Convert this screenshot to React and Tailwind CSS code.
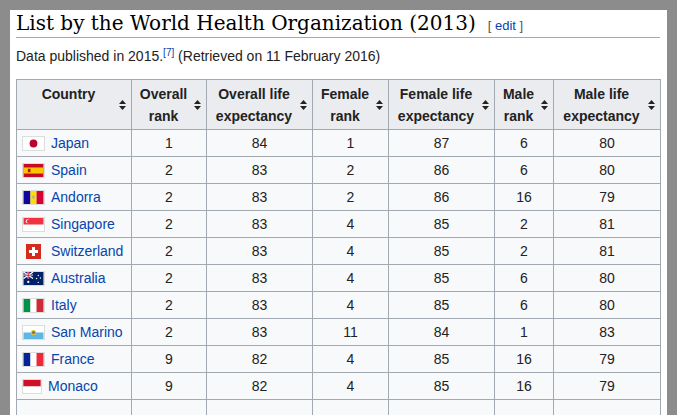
import React from "react";

const rows = [
  ["Japan", "jp", 1, 84, 1, 87, 6, 80],
  ["Spain", "es", 2, 83, 2, 86, 6, 80],
  ["Andorra", "ad", 2, 83, 2, 86, 16, 79],
  ["Singapore", "sg", 2, 83, 4, 85, 2, 81],
  ["Switzerland", "ch", 2, 83, 4, 85, 2, 81],
  ["Australia", "au", 2, 83, 4, 85, 6, 80],
  ["Italy", "it", 2, 83, 4, 85, 6, 80],
  ["San Marino", "sm", 2, 83, 11, 84, 1, 83],
  ["France", "fr", 9, 82, 4, 85, 16, 79],
  ["Monaco", "mc", 9, 82, 4, 85, 16, 79],
  ["", "", "", "", "", "", "", ""],
];

function Flag({ c }) {
  const box = "w-[23px] h-[15px] border border-[#ddd] shrink-0";
  switch (c) {
    case "jp":
      return <svg className={box} viewBox="0 0 23 15"><rect width="23" height="15" fill="#fff" /><circle cx="11.5" cy="7.5" r="4.5" fill="#bc002d" /></svg>;
    case "es":
      return <svg className={box} viewBox="0 0 23 15"><rect width="23" height="15" fill="#c60b1e" /><rect y="4" width="23" height="7" fill="#ffc400" /><rect x="5" y="5.5" width="3" height="4" fill="#ad1519" /></svg>;
    case "ad":
      return <svg className={box} viewBox="0 0 23 15"><rect width="8" height="15" fill="#10069f" /><rect x="8" width="7" height="15" fill="#fedd00" /><rect x="15" width="8" height="15" fill="#d50032" /><rect x="10" y="5" width="3" height="4" fill="#c7b37f" /></svg>;
    case "sg":
      return <svg className={box} viewBox="0 0 23 15"><rect width="23" height="15" fill="#fff" /><rect width="23" height="7.5" fill="#ef3340" /><circle cx="5" cy="3.8" r="2.4" fill="#fff" /><circle cx="6" cy="3.8" r="2.2" fill="#ef3340" /></svg>;
    case "ch":
      return <svg className="w-[15px] h-[15px] mx-1 shrink-0" viewBox="0 0 15 15"><rect width="15" height="15" fill="#d52b1e" /><rect x="6" y="3" width="3" height="9" fill="#fff" /><rect x="3" y="6" width="9" height="3" fill="#fff" /></svg>;
    case "au":
      return <svg className={box} viewBox="0 0 23 15"><rect width="23" height="15" fill="#012169" /><path d="M0 0L11 7.5M11 0L0 7.5" stroke="#fff" strokeWidth="1.5" /><path d="M5.5 0v7.5M0 3.75h11" stroke="#fff" strokeWidth="2" /><path d="M5.5 0v7.5M0 3.75h11" stroke="#c8102e" strokeWidth="1" /><circle cx="5.5" cy="11.5" r="1.3" fill="#fff" /><circle cx="17" cy="4" r="0.8" fill="#fff" /><circle cx="19.5" cy="7" r="0.8" fill="#fff" /><circle cx="17" cy="12" r="0.8" fill="#fff" /><circle cx="15" cy="7.5" r="0.8" fill="#fff" /></svg>;
    case "it":
      return <svg className={box} viewBox="0 0 23 15"><rect width="8" height="15" fill="#009246" /><rect x="8" width="7" height="15" fill="#fff" /><rect x="15" width="8" height="15" fill="#ce2b37" /></svg>;
    case "sm":
      return <svg className={box} viewBox="0 0 23 15"><rect width="23" height="7.5" fill="#fff" /><rect y="7.5" width="23" height="7.5" fill="#5eb6e4" /><circle cx="11.5" cy="7.5" r="3" fill="#f1bf31" /><circle cx="11.5" cy="7.5" r="1.8" fill="#657d5c" /></svg>;
    case "fr":
      return <svg className={box} viewBox="0 0 23 15"><rect width="8" height="15" fill="#002395" /><rect x="8" width="7" height="15" fill="#fff" /><rect x="15" width="8" height="15" fill="#ed2939" /></svg>;
    case "mc":
      return <svg className="w-[20px] h-[15px] border border-[#ddd] shrink-0" viewBox="0 0 20 15"><rect width="20" height="7.5" fill="#ce1126" /><rect y="7.5" width="20" height="7.5" fill="#fff" /></svg>;
    default:
      return null;
  }
}

function Sort() {
  return (
    <svg className="w-[7px] h-[10px] shrink-0" viewBox="0 0 7 10">
      <path d="M3.5 0L7 4H0z M3.5 10L7 6H0z" fill="#222" />
    </svg>
  );
}

const heads = [
  ["Country", ""],
  ["Overall", "rank"],
  ["Overall life", "expectancy"],
  ["Female", "rank"],
  ["Female life", "expectancy"],
  ["Male", "rank"],
  ["Male life", "expectancy"],
];
const widths = ["w-[115px]", "w-[75px]", "w-[106px]", "w-[76px]", "w-[106px]", "w-[59px]", "w-[107px]"];

export default function App() {
  return (
    <div className="w-[677px] h-[415px] bg-[#8c8c8c] p-[10px] overflow-hidden" style={{ fontFamily: "'Liberation Sans', Arial, sans-serif" }}>
      <div className="bg-white h-[405px] w-[657px] pl-[6px] pr-[7px] overflow-hidden">
        <div className="flex items-baseline gap-3 border-b border-[#a2a9b1] pb-[1px]">
          <h2 className="text-[23px] leading-[26px] text-black" style={{ fontFamily: "'DejaVu Serif', 'Liberation Serif', serif", fontSize: "20px" }}>
            List by the World Health Organization (2013)
          </h2>
          <span className="text-[13px] text-[#555]">
            [ <span className="text-[#0645ad]">edit</span> ]
          </span>
        </div>
        <p className="text-[14px] text-[#222] mt-[8px] leading-[20px]">
          Data published in 2015.<sup className="text-[#0645ad] text-[10px]">[7]</sup> (Retrieved on 11 February 2016)
        </p>
        <table className="mt-[13px] border-collapse border border-[#a2a9b1] text-[14px] text-[#222] table-fixed bg-[#f8f9fa] w-[644px]">
          <thead>
            <tr className="h-[50px] bg-[#eaecf0]">
              {heads.map((h, i) => (
                <th key={i} className={`${widths[i]} border border-[#a2a9b1] px-[5px] font-bold align-middle`}>
                  <div className="flex items-center justify-between gap-1">
                    <div className="flex-1 text-center leading-[22px]">
                      <div>{h[0]}</div>
                      <div>{h[1] || "\u00a0"}</div>
                    </div>
                    <Sort />
                  </div>
                </th>
              ))}
            </tr>
          </thead>
          <tbody>
            {rows.map((r, i) => (
              <tr key={i} className="h-[27px]">
                <td className="border border-[#a2a9b1] px-[5px]">
                  <div className="flex items-center gap-[6px]">
                    <Flag c={r[1]} />
                    <span className="text-[#0645ad] text-[14px]">{r[0]}</span>
                  </div>
                </td>
                {r.slice(2).map((v, j) => (
                  <td key={j} className="border border-[#a2a9b1] text-center">{v}</td>
                ))}
              </tr>
            ))}
          </tbody>
        </table>
      </div>
    </div>
  );
}
